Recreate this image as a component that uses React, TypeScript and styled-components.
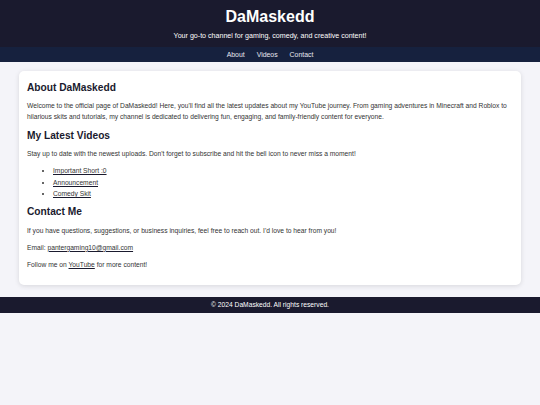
import React from "react";
import styled, { createGlobalStyle } from "styled-components";

const Global = createGlobalStyle`
  html, body { margin: 0; padding: 0; background: #f4f4f9; }
  body { font-family: "Liberation Sans", Arial, sans-serif; color: #333; }
`;

const Header = styled.header`
  background: #1a1a2e;
  color: #fff;
  text-align: center;
  padding: 7px 0 6px;
`;

const Title = styled.h1`
  margin: 0;
  font-size: 16px;
  line-height: 20px;
  font-weight: bold;
`;

const Tagline = styled.p`
  margin: 3.5px 0 0;
  font-size: 7.1px;
  line-height: 10px;
`;

const Nav = styled.nav`
  background: #16213e;
  display: flex;
  justify-content: center;
  gap: 12px;
  height: 15px;
  align-items: center;
`;

const NavLink = styled.a`
  color: #e8e8f0;
  text-decoration: none;
  font-size: 6.9px;
`;

const Main = styled.main`
  padding: 9px 19px 12px;
`;

const Card = styled.section`
  background: #fff;
  border-radius: 5px;
  box-shadow: 0 1px 5px rgba(0, 0, 0, 0.12);
  padding: 4px 8px 9px;
`;

const Heading = styled.h2`
  margin: 6px 0 0;
  font-size: 10.2px;
  line-height: 14px;
  color: #1a1a2e;
`;

const Text = styled.p`
  margin: 5.5px 0;
  font-size: 6.7px;
  line-height: 11.4px;
`;

const List = styled.ul`
  margin: 5px 0;
  padding-left: 26px;
  font-size: 6.7px;
  line-height: 11.4px;
`;

const Link = styled.a`
  color: #333;
  text-decoration: underline;
  text-decoration-color: #1a1a2e;
`;

const Footer = styled.footer`
  background: #1a1a2e;
  color: #fff;
  text-align: center;
  font-size: 6.7px;
  height: 16px;
  line-height: 16px;
`;

export default function App() {
  return (
    <>
      <Global />
      <Header>
        <Title>DaMaskedd</Title>
        <Tagline>Your go-to channel for gaming, comedy, and creative content!</Tagline>
      </Header>
      <Nav>
        <NavLink href="#about">About</NavLink>
        <NavLink href="#videos">Videos</NavLink>
        <NavLink href="#contact">Contact</NavLink>
      </Nav>
      <Main>
        <Card>
          <Heading>About DaMaskedd</Heading>
          <Text>
            Welcome to the official page of DaMaskedd! Here, you'll find all the latest updates about my YouTube journey. From gaming adventures in Minecraft and Roblox to hilarious skits and tutorials, my channel is dedicated to delivering fun, engaging, and family-friendly content for everyone.
          </Text>
          <Heading>My Latest Videos</Heading>
          <Text>Stay up to date with the newest uploads. Don't forget to subscribe and hit the bell icon to never miss a moment!</Text>
          <List>
            <li><Link href="#">Important Short :0</Link></li>
            <li><Link href="#">Announcement</Link></li>
            <li><Link href="#">Comedy Skit</Link></li>
          </List>
          <Heading>Contact Me</Heading>
          <Text>If you have questions, suggestions, or business inquiries, feel free to reach out. I'd love to hear from you!</Text>
          <Text>Email: <Link href="#">pantergaming10@gmail.com</Link></Text>
          <Text>Follow me on <Link href="#">YouTube</Link> for more content!</Text>
        </Card>
      </Main>
      <Footer>© 2024 DaMaskedd. All rights reserved.</Footer>
    </>
  );
}
